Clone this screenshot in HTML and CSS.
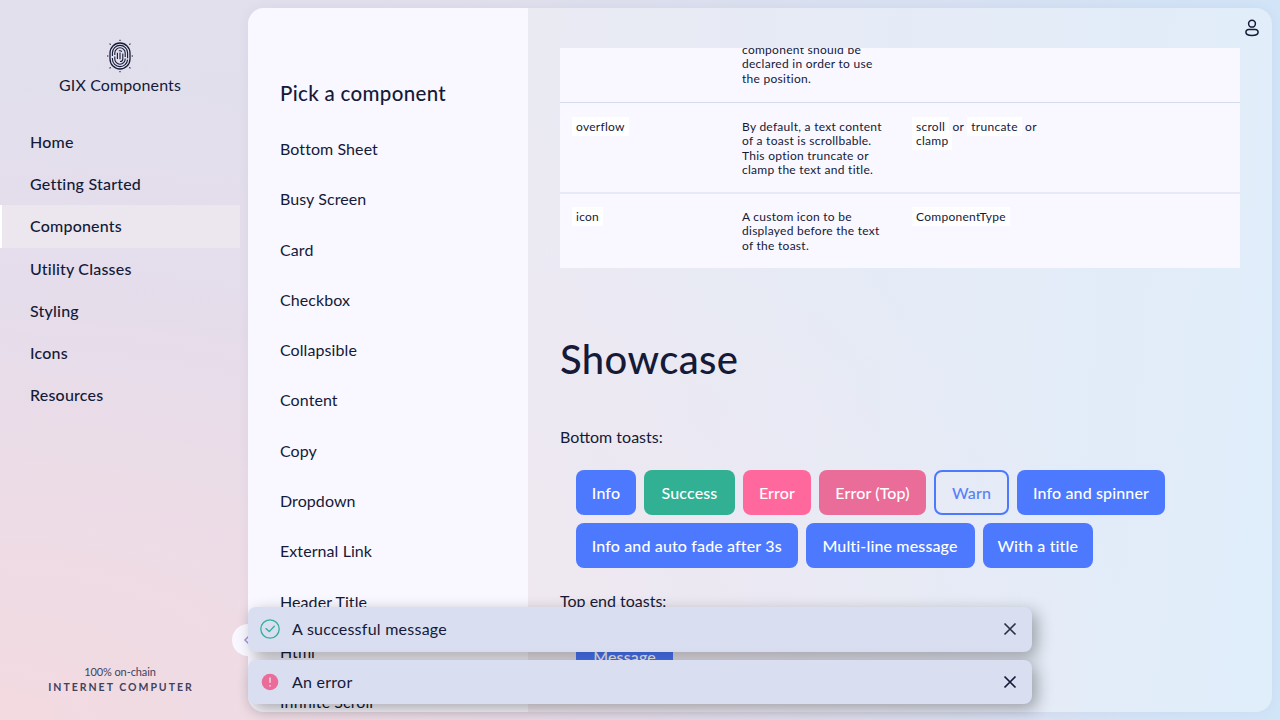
FILE: index.html
```
<!DOCTYPE html>
<html lang="en">
<head>
<meta charset="utf-8">
<title>GIX Components</title>
<link rel="stylesheet" href="styles.css">
</head>
<body>
<div class="app">
  <aside class="sidebar">
    <div class="brand">
      <svg class="logo" width="28" height="34" viewBox="0 0 28 34" fill="none" stroke="#141a38">
        <rect x="4" y="4" width="20" height="26" rx="10" stroke-width="1.3"/>
        <rect x="6.4" y="6.4" width="15.2" height="21.2" rx="7.6" stroke-width="1.1" stroke-dasharray="17 1.5 24 2"/>
        <rect x="8.8" y="8.8" width="10.4" height="16.4" rx="5.2" stroke-width="1.1" stroke-dasharray="12 1.5 19 1.5"/>
        <path d="M11.400 20v-6.200M16.800 14.500v5.700a2.600 2.600 0 0 1-2.800 2.300M14 20.200v-6.700M12.800 11.800h1.400a2 2 0 0 1 1.600 1" stroke-width="1.1"/>
        <path d="M14 .8v1.2M14 32v1.2M1 17h1.4M25.600 17h1.400M3.600 4.700l1 1M24.400 4.700l-1 1M3.600 29.300l1-1M24.400 29.300l-1-1" stroke-width="1.100"/>
      </svg>
      <span class="brand-name">GIX Components</span>
    </div>
    <nav class="nav">
      <a class="nav-item">Home</a>
      <a class="nav-item">Getting Started</a>
      <a class="nav-item selected">Components</a>
      <a class="nav-item">Utility Classes</a>
      <a class="nav-item">Styling</a>
      <a class="nav-item">Icons</a>
      <a class="nav-item">Resources</a>
    </nav>
    <footer class="onchain">
      <span class="onchain-top">100% on-chain</span>
      <span class="onchain-name">INTERNET COMPUTER</span>
    </footer>
  </aside>

  <main class="panel">
    <section class="picker">
      <h2 class="picker-title">Pick a component</h2>
      <ul class="picker-list">
        <li>Bottom Sheet</li>
        <li>Busy Screen</li>
        <li>Card</li>
        <li>Checkbox</li>
        <li>Collapsible</li>
        <li>Content</li>
        <li>Copy</li>
        <li>Dropdown</li>
        <li>External Link</li>
        <li>Header Title</li>
        <li>Html</li>
        <li>Infinite Scroll</li>
      </ul>
    </section>
    <section class="detail">
      <header class="toolbar">
        <svg width="20" height="20" viewBox="0 0 20 20" fill="none" stroke="#141a38" stroke-width="1.500">
          <circle cx="10" cy="5.700" r="3.400"/>
          <path d="M6.600 11.500h6.800a2.700 2.700 0 0 1 2.700 2.700c0 2.100-3 3.200-6.100 3.200s-6.100-1.100-6.100-3.200a2.700 2.700 0 0 1 2.700-2.700z"/>
        </svg>
      </header>
      <div class="content">
        <div class="table">
          <div class="row row-cut">
            <div></div>
            <div>component should be declared in order to use the position.</div>
          </div>
          <div class="row row-overflow">
            <div><code>overflow</code></div>
            <div>By default, a text content of a toast is scrollbable. This option truncate or clamp the text and title.</div>
            <div><code>scroll</code> or <code>truncate</code> or <code>clamp</code></div>
          </div>
          <div class="row row-icon">
            <div><code>icon</code></div>
            <div>A custom icon to be displayed before the text of the toast.</div>
            <div><code>ComponentType</code></div>
          </div>
        </div>
        <h1 class="showcase">Showcase</h1>
        <p class="label">Bottom toasts:</p>
        <div class="buttons">
          <div class="button-row">
            <button class="btn w-info">Info</button>
            <button class="btn success w-success">Success</button>
            <button class="btn error w-error">Error</button>
            <button class="btn error-top w-top">Error (Top)</button>
            <button class="btn warn w-warn">Warn</button>
            <button class="btn w-spinner">Info and spinner</button>
          </div>
          <div class="button-row">
            <button class="btn w-fade">Info and auto fade after 3s</button>
            <button class="btn w-multi">Multi-line message</button>
            <button class="btn w-title">With a title</button>
          </div>
        </div>
        <p class="label">Top end toasts:</p>
        <div class="buttons">
          <div class="button-row"><button class="btn w-message">Message</button></div>
        </div>
      </div>
    </section>
  </main>

  <div class="collapse">
    <svg width="16" height="16" viewBox="0 0 16 16" fill="none" stroke="#a596dc" stroke-width="1.500"><path d="M9 4l-4 4 4 4"/></svg>
  </div>

  <div class="toasts">
    <div class="toast">
      <svg class="toast-icon" width="20" height="20" viewBox="0 0 20 20" fill="none" stroke="#31b093" stroke-width="1.300">
        <circle cx="10" cy="10" r="9.200"/><path d="M5.900 9.600l3.400 3 5-5.300" stroke-linecap="round" stroke-linejoin="round"/>
      </svg>
      <p class="toast-text">A successful message</p>
      <svg width="20" height="20" viewBox="0 0 20 20" fill="none" stroke="#2a3048" stroke-width="1.700"><path d="M4.500 4.500l11 11M15.500 4.500l-11 11"/></svg>
    </div>
    <div class="toast">
      <svg class="toast-icon" width="20" height="20" viewBox="0 0 20 20">
        <circle cx="10" cy="10" r="8.300" fill="#ea6c99"/><path d="M10 5.600v5.200M10 12.900v1.500" stroke="#f3d0e0" stroke-width="1.600"/>
      </svg>
      <p class="toast-text">An error</p>
      <svg width="20" height="20" viewBox="0 0 20 20" fill="none" stroke="#141a38" stroke-width="1.700"><path d="M4.500 4.500l11 11M15.500 4.500l-11 11"/></svg>
    </div>
  </div>
</div>
</body>
</html>
```

FILE: styles.css
```
* { box-sizing: border-box; }

body {
  margin: 0;
  font-family: Lato, "Open Sans", sans-serif;
  font-size: 16px;
  color: #141a38;
  letter-spacing: 0.080px;
}

h1, h2, p, ul { margin: 0; padding: 0; font-weight: 400; list-style: none; }

.app {
  position: relative;
  display: flex;
  width: 1280px;
  height: 720px;
  overflow: hidden;
  background:
    radial-gradient(ellipse 1150px 680px at 0 100%, #f3dae0 0%, rgba(240, 219, 228, 0.800) 30%, rgba(232, 219, 234, 0.600) 62%, rgba(224, 223, 238, 0) 100%),
    linear-gradient(95deg, #e2e0ed 0%, #e1dfec 35%, #dbe0ef 55%, #d4e3f5 85%, #d1e5f8 100%);
}

.sidebar {
  display: flex;
  flex-direction: column;
  flex: none;
  width: 240px;
  padding: 39px 0 26px;
}

.brand { display: flex; flex-direction: column; align-items: center; height: 82px; }
.brand-name { line-height: 24px; letter-spacing: 0.12px; }

.nav { display: flex; flex-direction: column; }
.nav-item {
  height: 42.200px;
  padding-left: 30px;
  line-height: 42.200px;
  font-weight: 500;
  letter-spacing: 0.200px;
}
.nav-item.selected {
  padding-left: 28px;
  border-left: 2px solid #fff;
  background: #ece7ee;
}

.onchain {
  display: flex;
  flex-direction: column;
  align-items: center;
  margin-top: auto;
  color: #3f4260;
}
.onchain-top { font-size: 11px; line-height: 14px; margin-bottom: 1px; letter-spacing: -0.100px; }
.onchain-name {
  font-size: 10.500px;
  line-height: 14px;
  font-weight: 700;
  letter-spacing: 2px;
  margin-right: -2px;
}

.panel {
  display: flex;
  width: 1024px;
  height: 704px;
  margin: 8px;
  overflow: hidden;
  border-radius: 16px;
  background: rgba(255, 255, 255, 0.340);
  box-shadow: 0 0 12px rgba(90, 80, 130, 0.060);
}

.picker {
  flex: none;
  width: 280px;
  padding: 73px 32px 0;
  background: #f9f7ff;
}
.picker-title {
  height: 43px;
  font-size: 20.500px;
  line-height: 24px;
  font-weight: 500;
  letter-spacing: 0.330px;
}
.picker-list li { height: 50.310px; line-height: 50.310px; }

.detail { flex: 1; }
.toolbar { display: flex; justify-content: flex-end; height: 40px; padding: 10px 10px 0 0; }
.content { padding: 0 32px; }

.table { font-size: 12px; line-height: 14.400px; letter-spacing: 0.270px; }
.row {
  display: grid;
  grid-template-columns: repeat(4, 170px);
  background: #f9f7ff;
}
.row > div { padding: 16px 12px; }
.row-cut {
  height: 55px;
  align-content: end;
  overflow: hidden;
  border-bottom: 1px solid #d5dcef;
}
.row-overflow { height: 91px; padding-top: 1px; border-bottom: 2px solid #e7eaf6; }
.row-icon { height: 74px; }
code {
  padding: 2px 4px;
  font-family: inherit;
  background: #fff;
}

.showcase {
  margin-top: 63px;
  font-size: 40px;
  line-height: 56px;
  font-weight: 500;
  letter-spacing: 0.400px;
}
.label { margin-top: 38px; line-height: 24px; letter-spacing: 0; }
.buttons {
  display: flex;
  flex-direction: column;
  gap: 8px;
  padding: 21.400px 16px 0;
}
.buttons + .label { margin-top: 20.600px; }
.button-row { display: flex; gap: 8px; }

.btn {
  height: 45px;
  padding: 0;
  border: 0;
  border-radius: 8px;
  font: 500 16px/20px Lato, "Open Sans", sans-serif;
  letter-spacing: 0.140px;
  color: #fff;
  background: #4d79ff;
}
.btn.success { background: #31b093; }
.btn.error { background: #ff689d; }
.btn.error-top { background: #ea6c99; }
.btn.warn { border: 2px solid #4d79ff; background: transparent; color: #5880f5; }

.w-info { width: 60px; }
.w-success { width: 91px; }
.w-error { width: 68px; }
.w-top { width: 107px; }
.w-warn { width: 75px; }
.w-spinner { width: 148px; }
.w-fade { width: 221.500px; }
.w-multi { width: 169px; }
.w-title { width: 110.500px; }
.w-message { width: 97px; }

.collapse {
  position: absolute;
  left: 232px;
  top: 624px;
  display: flex;
  align-items: center;
  justify-content: center;
  width: 32px;
  height: 32px;
  border-radius: 50%;
  background: #f9f7ff;
}

.toasts {
  position: absolute;
  left: 248px;
  bottom: 16px;
  display: flex;
  flex-direction: column;
  gap: 8px;
  width: 784px;
}
.toast {
  display: flex;
  align-items: center;
  gap: 12px;
  height: 44.500px;
  padding: 0 12px;
  border-radius: 8px;
  background: #d9def1;
  box-shadow: 5px 5px 16px rgba(0, 0, 0, 0.320);
}
.toast-text { flex: 1; line-height: 24px; letter-spacing: 0.250px; }
```
